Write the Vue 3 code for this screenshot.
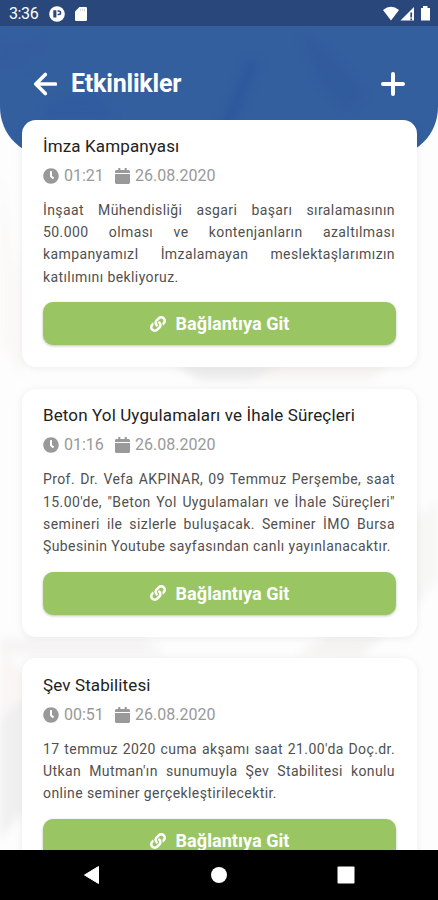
<script setup>
const events = [
  {
    title: 'İmza Kampanyası',
    time: '01:21',
    date: '26.08.2020',
    lines: [
      'İnşaat Mühendisliği asgari başarı sıralamasının',
      '50.000 olması ve kontenjanların azaltılması',
      'kampanyamızI İmzalamayan meslektaşlarımızın',
      'katılımını bekliyoruz.',
    ],
  },
  {
    title: 'Beton Yol Uygulamaları ve İhale Süreçleri',
    time: '01:16',
    date: '26.08.2020',
    lines: [
      'Prof. Dr. Vefa AKPINAR, 09 Temmuz Perşembe, saat',
      '15.00\'de, "Beton Yol Uygulamaları ve İhale Süreçleri"',
      'semineri ile sizlerle buluşacak. Seminer İMO Bursa',
      'Şubesinin Youtube sayfasından canlı yayınlanacaktır.',
    ],
  },
  {
    title: 'Şev Stabilitesi',
    time: '00:51',
    date: '26.08.2020',
    lines: [
      "17 temmuz 2020 cuma akşamı saat 21.00'da Doç.dr.",
      "Utkan Mutman'ın sunumuyla Şev Stabilitesi konulu",
      'online seminer gerçekleştirilecektir.',
    ],
  },
]
</script>

<template>
  <div class="screen">
    <svg class="backdrop" viewBox="0 0 438 900" aria-hidden="true">
      <defs>
        <filter id="soft"><feGaussianBlur stdDeviation="4" /></filter>
      </defs>
      <g filter="url(#soft)">
        <path d="M0 170L12 245L22 275V380L0 340Z" fill="#faf9f8" />
        <path d="M175 365H280L255 380H200Z" fill="#ececec" />
        <path d="M280 365H390L370 380H260Z" fill="#f7f4f2" />
        <path d="M400 530L438 500V580L400 625Z" fill="#f7f7f6" />
        <path d="M0 638H145L165 655H0Z" fill="#f6f5f4" />
        <path d="M295 655L330 636H385L360 656Z" fill="#f5f3f1" />
        <path d="M0 710L24 700V810L0 840Z" fill="#f0f0f0" />
        <path d="M0 650L22 670V700L0 720Z" fill="#f9f6f5" />
      </g>
    </svg>

    <header class="header">
      <svg class="texture" viewBox="0 0 438 157" aria-hidden="true">
        <g filter="url(#soft)">
          <path d="M247 60L260 62L232 130H218Z" fill="#2b559b" />
          <path d="M302 38L318 40L365 95L345 112L320 82Z" fill="#2e589c" />
          <path d="M45 105L95 92L115 118H45Z" fill="#2f5aa0" />
          <path d="M0 45L50 38L20 70H0Z" fill="#315b9f" />
        </g>
      </svg>
      <div class="status">
        <span class="clock">3:36</span>
        <svg class="status-app" width="16" height="16" viewBox="0 0 16 16">
          <circle cx="8" cy="8" r="7.8" fill="#fff" />
          <path d="M4.300 11.500V4.200H7.400V11.500Z" fill="#29477d" />
          <path d="M8.600 4.900H9.800A1.700 1.700 0 0 1 9.800 8.400H8.600" fill="none" stroke="#29477d" stroke-width="1.5" />
        </svg>
        <svg class="status-card" width="12" height="14" viewBox="0 0 12 14">
          <path d="M4.4 0H10.8Q12 0 12 1.2V12.8Q12 14 10.8 14H1.2Q0 14 0 12.8V4.5Z" fill="#fff" />
          <path d="M5.3 1.8V4.2M7.4 1.8V4.2M9.5 1.8V4.2" stroke="#b9c4d8" stroke-width=".8" />
        </svg>
        <svg class="status-right" width="48" height="16" viewBox="0 0 48 16">
          <path d="M0 4Q8-2.5 16 4L8 14.5Z" fill="#fff" />
          <path d="M17.5 14.5L31 1V14.5Z" fill="#fff" />
          <path d="M28.2 6.5V11.5M28.2 12.6V14.2" stroke="#29477d" stroke-width="1.7" />
          <path d="M38 2H40V0H44.5V2H47V14.5H38Z" fill="#fff" />
        </svg>
      </div>
      <div class="toolbar">
        <svg width="24" height="24" viewBox="0 0 24 24">
          <path d="M12.300 2.500L2.800 12L12.300 21.500M3 12H22.500" fill="none" stroke="#fff" stroke-width="3.6" stroke-linecap="round" stroke-linejoin="round" />
        </svg>
        <h1>Etkinlikler</h1>
        <svg width="24" height="24" viewBox="0 0 24 24">
          <path d="M12 2V22M2 12H22" fill="none" stroke="#fff" stroke-width="4" stroke-linecap="round" />
        </svg>
      </div>
    </header>

    <main class="list">
      <article v-for="event in events" :key="event.title" class="card">
        <h2>{{ event.title }}</h2>
        <div class="meta">
          <svg width="16" height="16" viewBox="0 0 512 512" fill="currentColor">
            <path d="M256,8C119,8,8,119,8,256S119,504,256,504,504,393,504,256,393,8,256,8Zm92.49,313h0l-20,25a16,16,0,0,1-22.49,2.5h0l-67-49.72a40,40,0,0,1-15-31.23V112a16,16,0,0,1,16-16h32a16,16,0,0,1,16,16V256l58,42.5A16,16,0,0,1,348.49,321Z" />
          </svg>
          <span class="time">{{ event.time }}</span>
          <svg width="15" height="16" viewBox="0 0 448 512" preserveAspectRatio="none" fill="currentColor">
            <path d="M12 192h424c6.600 0 12 5.400 12 12v260c0 26.500-21.500 48-48 48H48c-26.500 0-48-21.500-48-48V204c0-6.600 5.400-12 12-12zm436-44v-36c0-26.500-21.500-48-48-48h-48V12c0-6.600-5.400-12-12-12h-40c-6.600 0-12 5.400-12 12v52H160V12c0-6.600-5.400-12-12-12h-40c-6.600 0-12 5.400-12 12v52H48C21.500 64 0 85.500 0 112v36c0 6.600 5.400 12 12 12h424c6.600 0 12-5.400 12-12z" />
          </svg>
          <span class="date">{{ event.date }}</span>
        </div>
        <p>
          <span v-for="line in event.lines" :key="line" class="line">{{ line }}</span>
        </p>
        <button type="button">
          <svg width="16" height="16" viewBox="0 0 512 512" fill="currentColor">
            <path d="M326.612 185.391c59.747 59.809 58.927 155.698.36 214.590-.11.120-.24.250-.36.370l-67.200 67.200c-59.270 59.270-155.699 59.262-214.960 0-59.270-59.260-59.270-155.700 0-214.960l37.106-37.106c9.840-9.840 26.786-3.300 27.294 10.606.648 17.722 3.826 35.527 9.690 52.721 1.986 5.822.567 12.262-3.783 16.612l-13.087 13.087c-28.026 28.026-28.905 73.660-1.155 101.960 28.024 28.579 74.086 28.749 102.325.510l67.200-67.190c28.191-28.191 28.073-73.757 0-101.830-3.701-3.694-7.429-6.564-10.341-8.569a16.037 16.037 0 0 1-6.947-12.606c-.396-10.567 3.348-21.456 11.698-29.806l21.054-21.055c5.521-5.521 14.182-6.199 20.584-1.731a152.482 152.482 0 0 1 20.522 17.197zM467.547 44.449c-59.261-59.262-155.690-59.270-214.960 0l-67.200 67.200c-.12.120-.25.250-.36.370-58.566 58.892-59.387 154.781.360 214.590a152.454 152.454 0 0 0 20.521 17.196c6.402 4.468 15.064 3.789 20.584-1.731l21.054-21.055c8.350-8.350 12.094-19.239 11.698-29.806a16.037 16.037 0 0 0-6.947-12.606c-2.912-2.005-6.640-4.875-10.341-8.569-28.073-28.073-28.191-73.639 0-101.830l67.200-67.190c28.239-28.239 74.300-28.069 102.325.510 27.750 28.300 26.872 73.934-1.155 101.960l-13.087 13.087c-4.350 4.350-5.769 10.790-3.783 16.612 5.864 17.194 9.042 34.999 9.690 52.721.509 13.906 17.454 20.446 27.294 10.606l37.106-37.106c59.271-59.259 59.271-155.699.001-214.959z" />
          </svg>
          <span>Bağlantıya Git</span>
        </button>
      </article>
    </main>

    <nav class="navbar">
      <svg width="18" height="20" viewBox="0 0 18 20"><path d="M1.500 10L15.500 1.500V18.500Z" fill="#fff" stroke="#fff" stroke-linejoin="round" /></svg>
      <svg width="18" height="18" viewBox="0 0 18 18"><circle cx="9" cy="9" r="8" fill="#fff" /></svg>
      <svg width="18" height="18" viewBox="0 0 18 18"><rect x=".5" y=".5" width="17" height="17" rx="1" fill="#fff" /></svg>
    </nav>
  </div>
</template>

<style>
body {
  margin: 0;
}
</style>

<style scoped>
.screen {
  position: relative;
  display: flex;
  flex-direction: column;
  width: 438px;
  height: 900px;
  overflow: hidden;
  background: #fdfdfd;
  font-family: Roboto, "Liberation Sans", sans-serif;
}
.backdrop {
  position: absolute;
  inset: 0;
}
.header {
  position: relative;
  flex: none;
  height: 157px;
  overflow: hidden;
  border-radius: 0 0 50px 50px;
  background: #345f9f;
}
.texture {
  position: absolute;
  inset: 0;
  opacity: 0.55;
}
.status {
  position: relative;
  display: flex;
  align-items: center;
  height: 26px;
  box-sizing: border-box;
  padding: 2px 7px 0 9px;
  background: #29477b;
  color: #fff;
}
.clock {
  width: 40px;
  font-size: 16px;
  line-height: 20px;
  letter-spacing: -0.4px;
}
.status-card {
  margin-left: 10px;
}
.status-right {
  margin-left: auto;
}
.toolbar {
  position: relative;
  display: flex;
  align-items: center;
  height: 32px;
  padding: 42px 33px 0;
}
.toolbar h1 {
  flex: 1;
  margin: 0 0 0 14px;
  color: #fff;
  font-size: 25px;
  font-weight: 700;
  line-height: 32px;
  letter-spacing: -0.2px;
}
.list {
  position: relative;
  flex: 1;
  min-height: 0;
  display: flex;
  flex-direction: column;
  gap: 21.500px;
  margin-top: -37.500px;
  padding: 0 21px 0 22px;
  overflow: hidden;
}
.card {
  flex: none;
  box-sizing: border-box;
  padding: 15.200px 21px 22px;
  border-radius: 14px;
  background: #fff;
  box-shadow: 0 1px 8px rgba(0, 0, 0, 0.07);
}
.card h2 {
  margin: 0;
  color: #222;
  font-size: 17px;
  font-weight: 400;
  line-height: 22px;
  letter-spacing: 0.120px;
}
.meta {
  display: flex;
  align-items: center;
  height: 20px;
  margin-top: 9.300px;
  color: #999;
  font-size: 16px;
  line-height: 20px;
}
.time {
  width: 43px;
  margin: 0 8px 0 5px;
}
.date {
  margin-left: 5px;
}
.card p {
  margin: 13px 0 14.700px;
  padding-right: 1px;
  color: #505050;
  font-size: 14px;
  line-height: 22.200px;
  letter-spacing: 0.400px;
}
.line {
  display: block;
  white-space: nowrap;
  text-align: justify;
  text-align-last: justify;
}
.line:last-child {
  text-align-last: left;
}
.card button {
  display: flex;
  align-items: center;
  justify-content: center;
  gap: 10px;
  width: 100%;
  height: 43px;
  padding: 0;
  border: 0;
  border-radius: 10px;
  background: #99c663;
  box-shadow: 0 1px 3px rgba(0, 0, 0, 0.25);
  color: #fff;
  font-family: inherit;
  font-size: 18px;
  font-weight: 700;
  letter-spacing: 0.060px;
}
.navbar {
  position: relative;
  flex: none;
  display: flex;
  align-items: center;
  justify-content: space-between;
  height: 50px;
  box-sizing: border-box;
  padding: 0 83px 0 83px;
  background: #000;
}
</style>
